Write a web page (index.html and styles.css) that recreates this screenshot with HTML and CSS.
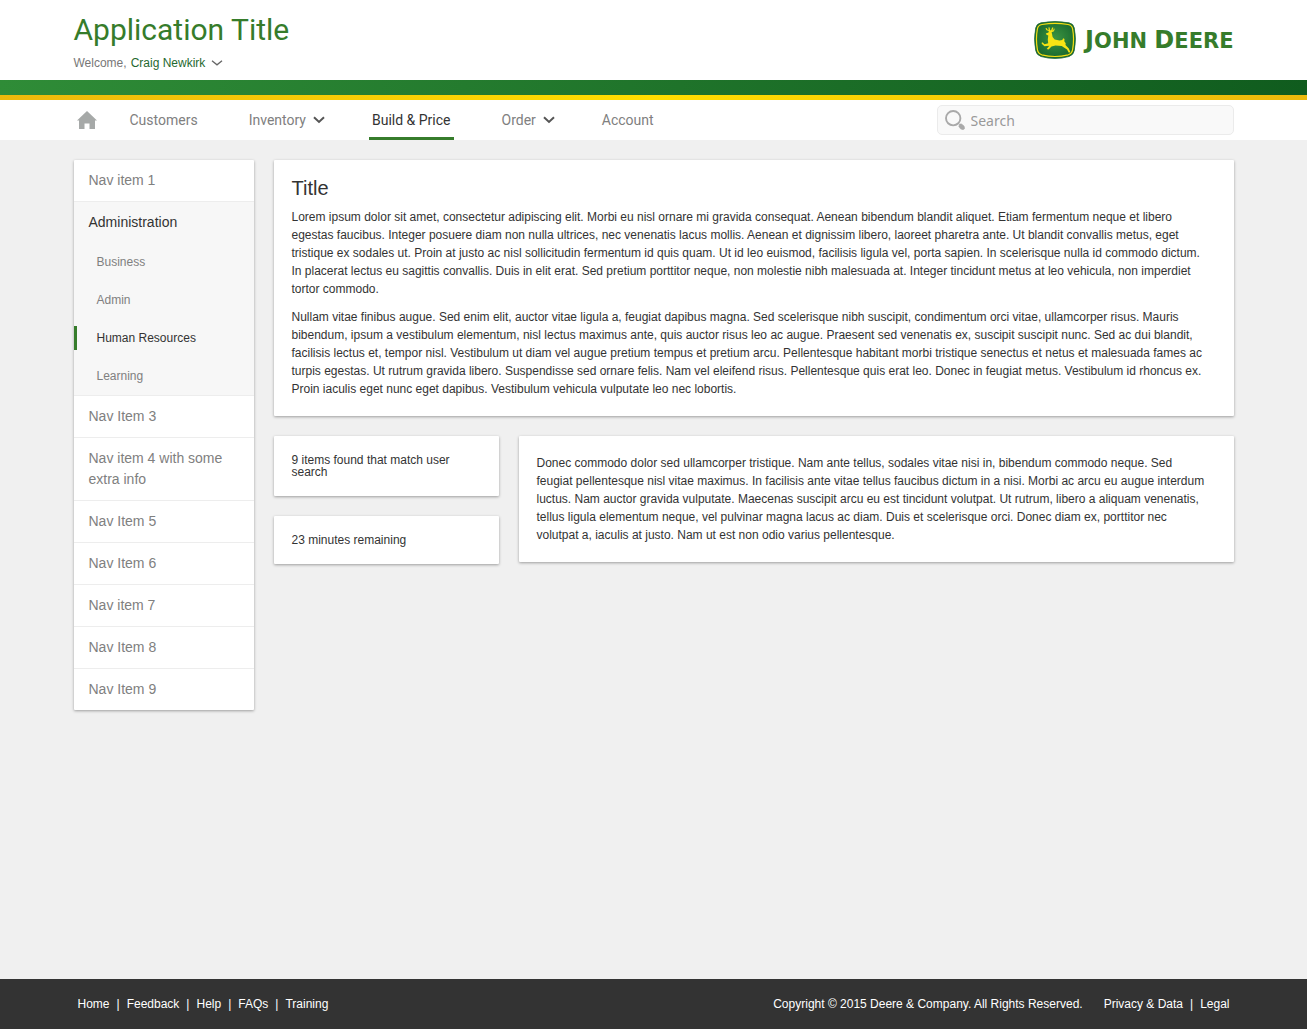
FILE: index.html
```html
<!DOCTYPE html>
<html lang="en">
<head>
<meta charset="utf-8">
<meta name="viewport" content="width=device-width, initial-scale=1">
<title>Application Title</title>
<link rel="stylesheet" href="styles.css">
</head>
<body>
<header>
  <div class="container masthead">
    <div class="masthead-text">
      <h1 class="app-title">Application Title</h1>
      <div class="welcome">
        <span>Welcome,</span>
        <button type="button" class="user-menu">Craig Newkirk
          <svg width="12" height="6" viewBox="0 0 12 6" aria-hidden="true"><path d="M1 .8 6 4.8 11 .8" fill="none" stroke="#666" stroke-width="1.3"/></svg>
        </button>
      </div>
    </div>
    <a class="brand" href="#" aria-label="John Deere">
      <svg class="brand-mark" width="42" height="38" viewBox="0 0 42 38" aria-hidden="true">
        <defs><radialGradient id="shield" cx=".5" cy=".45" r=".65"><stop offset="0" stop-color="#3c9440"/><stop offset="1" stop-color="#12602c"/></radialGradient></defs>
        <path d="M7 1.8Q21-.9 35 1.8Q39.500 2.600 40.300 7Q42.600 18 40.300 29.500Q39.500 34 35 35.500Q21 39.400 7 35.500Q2.500 34 1.700 29.500Q-.6 18 1.700 7Q2.500 2.600 7 1.800Z" fill="url(#shield)" stroke="#226a34" stroke-width=".8"/>
        <path d="M8 3.500Q21 1.200 34 3.500Q38 4.200 38.600 8Q40.500 18 38.600 28.700Q38 32.600 34.200 33.800Q21 37.200 7.800 33.800Q4 32.600 3.400 28.700Q1.500 18 3.400 8Q4 4.200 8 3.500Z" fill="none" stroke="#f5de12" stroke-width="1.200"/>
        <path d="M11.800 12.500 14.500 11.500 14.800 10 12.500 9.300 11.500 7.300 12.600 7.100 13.400 8.500 14.800 8.900 14.400 6.500 15.500 6.300 16 9 17 9.500 18.200 6.500 19.300 6.600 18.500 9.500 19.300 9.300 19.800 7.600 20.700 7.800 20 10.300 17.600 11.200 18 12.700 18.600 16 20.700 18.600 25.500 19.600 28.300 19 29.200 17.200 30.500 18 30.300 20.300 31.700 22.300 31.500 24 34.800 27.500 36.300 31 34.900 31.700 33 28.600 27.700 25 21.500 24.400 17.500 25.400 14.600 28.400 12.700 28 15.300 24.800 10.500 25.200 8.500 23.600 7.400 22 8.500 21.200 10.500 23.300 14.200 22.200 13.800 18.500 14.300 14.400 12.500 13.700Z" fill="#f8e414"/>
      </svg>
      <span class="wordmark"><span class="initial">J</span>OHN <span class="initial">D</span>EERE</span>
    </a>
  </div>
  <div class="stripe-green"></div>
  <div class="stripe-yellow"></div>
  <div class="topbar">
    <div class="container topbar-inner">
      <nav class="main-nav" aria-label="Main">
        <a class="home" href="#" aria-label="Home"><svg width="20" height="18" viewBox="0 0 20 18" aria-hidden="true"><path d="M10 0 0 9.500h2V18h5.500v-5.500h5V18H18V9.500h2Z" fill="#a6a9a8"/></svg></a>
        <a href="#">Customers</a>
        <a href="#">Inventory <svg width="12" height="8" viewBox="0 0 12 8" aria-hidden="true"><path d="M1 1.300 6 6 11 1.300" fill="none" stroke="#555" stroke-width="2"/></svg></a>
        <a class="current" href="#">Build &amp; Price</a>
        <a href="#">Order <svg width="12" height="8" viewBox="0 0 12 8" aria-hidden="true"><path d="M1 1.300 6 6 11 1.300" fill="none" stroke="#555" stroke-width="2"/></svg></a>
        <a href="#">Account</a>
      </nav>
      <label class="search">
        <svg width="20" height="20" viewBox="0 0 20 20" aria-hidden="true"><circle cx="8.200" cy="8.200" r="7.200" fill="none" stroke="#a9a9a9" stroke-width="1.900"/><path d="M14.500 14 16.500 14 19 16 19.700 18.500 18 19.800 15.500 18.800 13.900 16.500Z" fill="#a9a9a9" stroke="#a9a9a9" stroke-width=".6" stroke-linejoin="round"/></svg>
        <input type="search" placeholder="Search" aria-label="Search">
      </label>
    </div>
  </div>
</header>
<main class="container layout">
  <nav class="card side-nav" aria-label="Section">
    <ul>
      <li><a href="#">Nav item 1</a></li>
      <li class="open"><a href="#">Administration</a>
        <ul class="sub-nav">
          <li><a href="#">Business</a></li>
          <li><a href="#">Admin</a></li>
          <li class="current"><a href="#">Human Resources</a></li>
          <li><a href="#">Learning</a></li>
        </ul>
      </li>
      <li><a href="#">Nav Item 3</a></li>
      <li><a href="#">Nav item 4 with some extra info</a></li>
      <li><a href="#">Nav Item 5</a></li>
      <li><a href="#">Nav Item 6</a></li>
      <li><a href="#">Nav item 7</a></li>
      <li><a href="#">Nav Item 8</a></li>
      <li><a href="#">Nav Item 9</a></li>
    </ul>
  </nav>
  <div class="content">
    <article class="card panel">
      <h2>Title</h2>
      <p>Lorem ipsum dolor sit amet, consectetur adipiscing elit. Morbi eu nisl ornare mi gravida consequat. Aenean bibendum blandit aliquet. Etiam fermentum neque et libero egestas faucibus. Integer posuere diam non nulla ultrices, nec venenatis lacus mollis. Aenean et dignissim libero, laoreet pharetra ante. Ut blandit convallis metus, eget tristique ex sodales ut. Proin at justo ac nisl sollicitudin fermentum id quis quam. Ut id leo euismod, facilisis ligula vel, porta sapien. In scelerisque nulla id commodo dictum.<br>In placerat lectus eu sagittis convallis. Duis in elit erat. Sed pretium porttitor neque, non molestie nibh malesuada at. Integer tincidunt metus at leo vehicula, non imperdiet<br>tortor commodo.</p>
      <p>Nullam vitae finibus augue. Sed enim elit, auctor vitae ligula a, feugiat dapibus magna. Sed scelerisque nibh suscipit, condimentum orci vitae, ullamcorper risus. Mauris bibendum, ipsum a vestibulum elementum, nisl lectus maximus ante, quis auctor risus leo ac augue. Praesent sed venenatis ex, suscipit suscipit nunc. Sed ac dui blandit, facilisis lectus et, tempor nisl. Vestibulum ut diam vel augue pretium tempus et pretium arcu. Pellentesque habitant morbi tristique senectus et netus et malesuada fames ac turpis egestas. Ut rutrum gravida libero. Suspendisse sed ornare felis. Nam vel eleifend risus. Pellentesque quis erat leo. Donec in feugiat metus. Vestibulum id rhoncus ex. Proin iaculis eget nunc eget dapibus. Vestibulum vehicula vulputate leo nec lobortis.</p>
    </article>
    <div class="row">
      <div class="stats">
        <div class="card panel stat">9 items found that match user search</div>
        <div class="card panel stat">23 minutes remaining</div>
      </div>
      <article class="card panel detail">
        <p>Donec commodo dolor sed ullamcorper tristique. Nam ante tellus, sodales vitae nisi in, bibendum commodo neque. Sed<br>feugiat pellentesque nisl vitae maximus. In facilisis ante vitae tellus faucibus dictum in a nisi. Morbi ac arcu eu augue interdum<br>luctus. Nam auctor gravida vulputate. Maecenas suscipit arcu eu est tincidunt volutpat. Ut rutrum, libero a aliquam venenatis,<br>tellus ligula elementum neque, vel pulvinar magna lacus ac diam. Duis et scelerisque orci. Donec diam ex, porttitor nec<br>volutpat a, iaculis at justo. Nam ut est non odio varius pellentesque.</p>
      </article>
    </div>
  </div>
</main>
<footer>
  <div class="container footer-inner">
    <ul class="footer-links">
      <li><a href="#">Home</a></li><li><a href="#">Feedback</a></li><li><a href="#">Help</a></li><li><a href="#">FAQs</a></li><li><a href="#">Training</a></li>
    </ul>
    <div class="legal">
      <span>Copyright © 2015 Deere &amp; Company. All Rights Reserved.</span>
      <ul class="footer-links"><li><a href="#">Privacy &amp; Data</a></li><li><a href="#">Legal</a></li></ul>
    </div>
  </div>
</footer>
</body>
</html>
```
FILE: styles.css
```css
* { box-sizing: border-box; }

body {
  margin: 0;
  min-height: 100vh;
  display: flex;
  flex-direction: column;
  background: #f0f0f0;
  color: #333;
  font: 12px/18px "Liberation Sans", Arial, sans-serif;
}

h1, h2, p, ul { margin: 0; padding: 0; }
h1, h2 { font-weight: 400; }
ul { list-style: none; }
a { color: inherit; text-decoration: none; }
svg { display: block; flex: none; }

.container {
  width: 100%;
  max-width: 1160px;
  margin: 0 auto;
}

/* Masthead */
header { background: #fff; }

.masthead {
  display: flex;
  justify-content: space-between;
  align-items: center;
  height: 80px;
}

.app-title {
  margin-top: 2px;
  font: 30px/40px Roboto, sans-serif;
  color: #367c2b;
}

.welcome {
  display: flex;
  gap: 4px;
  margin-top: 4px;
  color: #777;
}

.user-menu {
  display: flex;
  align-items: center;
  gap: 6px;
  padding: 0;
  border: 0;
  background: none;
  font: inherit;
  color: #1f692f;
}

.brand {
  display: flex;
  align-items: center;
  gap: 9px;
}

.wordmark {
  font: bold 21px/24px "DejaVu Sans", sans-serif;
  color: #367c2b;
}
.initial { font-size: 24px; }

.stripe-green {
  height: 15px;
  background: linear-gradient(100deg, #2f8c37, #105c1e);
}
.stripe-yellow {
  height: 5px;
  background: linear-gradient(90deg, #ecb90c, #ffde00 50%, #ecb90c);
}

/* Main navigation */
.topbar-inner {
  display: flex;
  justify-content: space-between;
  align-items: center;
  height: 40px;
}

.main-nav {
  display: flex;
  gap: 45px;
  font: 14px/38px Roboto, sans-serif;
  color: #808080;
}
.main-nav a {
  display: flex;
  align-items: center;
  gap: 7px;
  height: 40px;
  padding: 2px 3px 0;
  border-bottom: 3px solid transparent;
}
.main-nav a:not(.home) svg { margin-right: -4px; }
.main-nav .home { margin-right: -18px; }
.main-nav .current {
  color: #333;
  border-bottom-color: #367c2b;
}

.search {
  display: flex;
  align-items: center;
  gap: 6px;
  width: 297px;
  height: 30px;
  padding: 0 7px;
  border: 1px solid #ebebeb;
  border-radius: 5px;
  background: #f9f9f9;
}
.search input {
  flex: 1;
  min-width: 0;
  padding: 2px 0 0;
  border: 0;
  outline: 0;
  background: none;
  color: #333;
  font: 14px/20px "Noto Sans", sans-serif;
}
.search input::placeholder { color: #999; }

/* Page body */
.layout {
  flex: 1;
  display: flex;
  align-items: flex-start;
  gap: 20px;
  padding: 20px 0;
}
.content {
  flex: 1;
  min-width: 0;
}
.card {
  background: #fff;
  border-radius: 1px;
  box-shadow: 0 1px 3px rgba(0, 0, 0, .35);
}

.side-nav {
  flex: 0 0 180px;
  font-size: 14px;
  line-height: 21px;
  color: #808080;
}
.side-nav > ul > li + li { border-top: 1px solid #ededed; }
.side-nav a {
  display: block;
  padding: 10px 15px;
}
.side-nav .open {
  background: #f7f7f7;
  color: #333;
}
.sub-nav {
  font-size: 12px;
  line-height: 24px;
  color: #808080;
}
.sub-nav li { padding: 7px 0; }
.sub-nav a {
  padding: 0 15px 0 20px;
  border-left: 3px solid transparent;
}
.sub-nav .current a {
  color: #333;
  border-left-color: #367c2b;
}

.panel { padding: 18px; }
.panel h2 {
  font-size: 20px;
  line-height: 20px;
  margin-bottom: 10px;
}
.panel p + p { margin-top: 10px; }

.row {
  display: flex;
  align-items: flex-start;
  gap: 20px;
  margin-top: 20px;
}
.stats {
  flex: 0 0 225px;
  display: grid;
  gap: 20px;
}
.stat { line-height: 12px; }
.detail {
  flex: 1;
  min-width: 0;
}

/* Footer */
footer {
  background: #333;
  color: #fff;
}
.footer-inner {
  display: flex;
  justify-content: space-between;
  align-items: center;
  height: 50px;
  padding: 0 4px;
}
.footer-links { display: flex; }
.footer-links li + li::before {
  content: "|";
  margin: 0 7px;
}
.legal {
  display: flex;
  gap: 21px;
}
```
